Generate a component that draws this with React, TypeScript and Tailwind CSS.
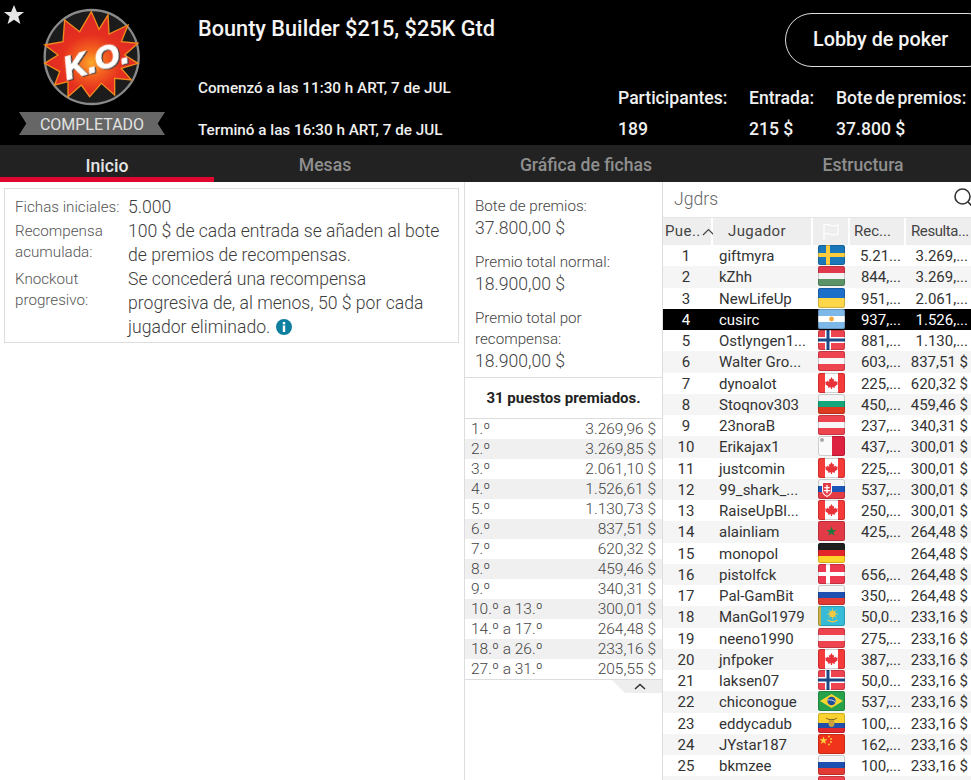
import React from "react";

type Row = [string, string, string, string, string];
const rows: Row[] = [
  ["1", "giftmyra", "se", "5.21...", "3.269,..."],
  ["2", "kZhh", "hu", "844,...", "3.269,..."],
  ["3", "NewLifeUp", "ua", "951,...", "2.061,..."],
  ["4", "cusirc", "ar", "937,...", "1.526,..."],
  ["5", "Ostlyngen1...", "no", "881,...", "1.130,..."],
  ["6", "Walter Gro...", "at", "603,...", "837,51 $"],
  ["7", "dynoalot", "ca", "225,...", "620,32 $"],
  ["8", "Stoqnov303", "bg", "450,...", "459,46 $"],
  ["9", "23noraB", "at", "237,...", "340,31 $"],
  ["10", "Erikajax1", "mt", "437,...", "300,01 $"],
  ["11", "justcomin", "ca", "225,...", "300,01 $"],
  ["12", "99_shark_...", "sk", "537,...", "300,01 $"],
  ["13", "RaiseUpBl...", "ca", "250,...", "300,01 $"],
  ["14", "alainliam", "ma", "425,...", "264,48 $"],
  ["15", "monopol", "de", "", "264,48 $"],
  ["16", "pistolfck", "dk", "656,...", "264,48 $"],
  ["17", "Pal-GamBit", "ru", "350,...", "264,48 $"],
  ["18", "ManGol1979", "kz", "50,0...", "233,16 $"],
  ["19", "neeno1990", "at", "275,...", "233,16 $"],
  ["20", "jnfpoker", "ca", "387,...", "233,16 $"],
  ["21", "laksen07", "no", "50,0...", "233,16 $"],
  ["22", "chiconogue", "br", "537,...", "233,16 $"],
  ["23", "eddycadub", "ec", "100,...", "233,16 $"],
  ["24", "JYstar187", "cn", "162,...", "233,16 $"],
  ["25", "bkmzee", "ru", "100,...", "233,16 $"],
  ["", "", "at", "", ""],
];

const prizes: [string, string][] = [
  ["1.º", "3.269,96 $"],
  ["2.º", "3.269,85 $"],
  ["3.º", "2.061,10 $"],
  ["4.º", "1.526,61 $"],
  ["5.º", "1.130,73 $"],
  ["6.º", "837,51 $"],
  ["7.º", "620,32 $"],
  ["8.º", "459,46 $"],
  ["9.º", "340,31 $"],
  ["10.º a 13.º", "300,01 $"],
  ["14.º a 17.º", "264,48 $"],
  ["18.º a 26.º", "233,16 $"],
  ["27.º a 31.º", "205,55 $"],
];

function FlagArt({ c }: { c: string }) {
  const h3 = (a: string, b: string, d: string) => (
    <>
      <rect width="27" height="7" fill={a} />
      <rect y="7" width="27" height="6" fill={b} />
      <rect y="13" width="27" height="7" fill={d} />
    </>
  );
  switch (c) {
    case "se":
      return (
        <>
          <rect width="27" height="20" fill="#1a78ba" />
          <rect x="8" width="4" height="20" fill="#fdcb3c" />
          <rect y="8" width="27" height="4" fill="#fdcb3c" />
        </>
      );
    case "hu":
      return h3("#e0394d", "#f3f3f3", "#5c9468");
    case "ua":
      return (
        <>
          <rect width="27" height="10" fill="#1c6fc9" />
          <rect y="10" width="27" height="10" fill="#fdd64a" />
        </>
      );
    case "ar":
      return (
        <>
          {h3("#7db8e8", "#ffffff", "#7db8e8")}
          <circle cx="13.5" cy="10" r="2.4" fill="#f6a93b" />
        </>
      );
    case "no":
      return (
        <>
          <rect width="27" height="20" fill="#ee4450" />
          <rect x="7" width="6" height="20" fill="#fff" />
          <rect y="7" width="27" height="6" fill="#fff" />
          <rect x="8.5" width="3" height="20" fill="#1d4a86" />
          <rect y="8.5" width="27" height="3" fill="#1d4a86" />
        </>
      );
    case "at":
      return h3("#ee4450", "#f7f7f7", "#ee4450");
    case "ca":
      return (
        <>
          <rect width="27" height="20" fill="#fff" />
          <rect width="7" height="20" fill="#f53a3a" />
          <rect x="20" width="7" height="20" fill="#f53a3a" />
          <path d="M13.5 4l1.4 2.6 1.3-.7-.5 3.2 1.8-1.6.4 1.2 2-.3-.7 2 .8.5-3.3 2.6.4 1.2-3-.4V16h-1.2v-1.7l-3 .4.4-1.2-3.3-2.6.8-.5-.7-2 2 .3.4-1.2 1.8 1.6-.5-3.2 1.3.7z" fill="#e8323a" />
        </>
      );
    case "bg":
      return h3("#f5f5f5", "#12a67a", "#dd3a1f");
    case "mt":
      return (
        <>
          <rect width="14" height="20" fill="#fafafa" />
          <rect x="14" width="13" height="20" fill="#dc2240" />
          <circle cx="4" cy="4" r="2" fill="#a8a8a8" />
        </>
      );
    case "sk":
      return (
        <>
          {h3("#f5f5f5", "#1c55b8", "#e53b44")}
          <path d="M4 3h10v9c0 3-2.5 4.5-5 6-2.5-1.5-5-3-5-6z" fill="#fff" />
          <path d="M5 4h8v8c0 2.4-2 3.6-4 4.8-2-1.2-4-2.4-4-4.8z" fill="#e53b44" />
          <path d="M8.3 6h1.4v2h2v1.2h-2V11h2.6v1.2H9.7v2H8.3v-2H5.7V11h2.6V9.2h-2V8h2z" fill="#fff" />
        </>
      );
    case "ma":
      return (
        <>
          <rect width="27" height="20" fill="#e23a46" />
          <path d="M13.5 5.5l1.3 3.5h3.7l-3 2.2 1.1 3.6-3.1-2.2-3.1 2.2 1.1-3.6-3-2.2h3.7z" fill="#1f7a3f" />
        </>
      );
    case "de":
      return h3("#1f1f1f", "#e3262a", "#fdd329");
    case "dk":
      return (
        <>
          <rect width="27" height="20" fill="#ee3a50" />
          <rect x="8" width="4" height="20" fill="#fff" />
          <rect y="8" width="27" height="4" fill="#fff" />
        </>
      );
    case "ru":
      return h3("#f5f5f5", "#1c4fb0", "#e23b35");
    case "kz":
      return (
        <>
          <rect width="27" height="20" fill="#36bcd8" />
          <rect width="3" height="20" fill="#c9b44a" />
          <circle cx="14.5" cy="8" r="3.2" fill="#f3c93f" />
          <path d="M14.5 2.5v11M9 8h11M10.6 4.1l7.8 7.8M18.4 4.1l-7.8 7.8" stroke="#f3c93f" strokeWidth=".8" />
          <path d="M9.5 14c3 2 7 2 10 0" stroke="#f3c93f" strokeWidth="1.4" fill="none" />
        </>
      );
    case "br":
      return (
        <>
          <rect width="27" height="20" fill="#27a24a" />
          <path d="M13.5 3L25 10l-11.500 7L2 10z" fill="#f8d430" />
          <circle cx="13.5" cy="10" r="4.2" fill="#1f4e9c" />
          <path d="M9.500 9c3-.6 6 .3 8 2" stroke="#fff" strokeWidth=".8" fill="none" />
        </>
      );
    case "ec":
      return (
        <>
          <rect width="27" height="10" fill="#fad22f" />
          <rect y="10" width="27" height="5" fill="#1f4fa8" />
          <rect y="15" width="27" height="5" fill="#e0262f" />
          <ellipse cx="13.500" cy="10" rx="3" ry="4" fill="#c9a13a" />
          <path d="M8 5c2 1.500 3.500 1.500 5.500 1.500S17 6.500 19 5" stroke="#7a5d2a" strokeWidth="1" fill="none" />
        </>
      );
    case "cn":
      return (
        <>
          <rect width="27" height="20" fill="#f0341c" />
          <path d="M5.500 2.500l1 2.800h3l-2.400 1.800.9 2.900-2.500-1.800-2.500 1.800.9-2.900-2.400-1.800h3z" fill="#fcd33c" />
          <circle cx="11" cy="2.500" r=".9" fill="#fcd33c" />
          <circle cx="13" cy="5" r=".9" fill="#fcd33c" />
          <circle cx="13" cy="8" r=".9" fill="#fcd33c" />
          <circle cx="11" cy="10.500" r=".9" fill="#fcd33c" />
        </>
      );
    default:
      return null;
  }
}

function Flag({ c }: { c: string }) {
  return (
    <svg width="27" height="20" viewBox="0 0 27 20" className="block">
      <defs>
        <clipPath id={"f-" + c}>
          <rect width="27" height="20" rx="2" />
        </clipPath>
      </defs>
      <g clipPath={`url(#f-${c})`}>
        <FlagArt c={c} />
      </g>
      <rect x=".5" y=".5" width="26" height="19" rx="2" fill="none" stroke="#000" strokeOpacity=".18" />
    </svg>
  );
}

function Logo() {
  const pts =
    "275,35 298,88 325,45 328,102 385,75 365,125 415,130 375,165 415,190 365,205 395,240 345,235 345,285 305,250 270,290 245,255 205,290 205,245 165,255 180,215 135,190 175,165 135,135 190,125 195,60 240,95";
  return (
    <svg width="100" height="100" viewBox="127 21 300 300" className="block">
      <defs>
        <radialGradient id="burst" cx="50%" cy="60%" r="50%">
          <stop offset="0%" stopColor="#fba82a" />
          <stop offset="30%" stopColor="#f4641f" />
          <stop offset="65%" stopColor="#e6301f" />
          <stop offset="100%" stopColor="#dd2a25" />
        </radialGradient>
      </defs>
      <circle cx="276" cy="171" r="141" fill="#1c1c1c" stroke="#8a8a8a" strokeWidth="7" />
      <polygon points={pts} fill="url(#burst)" stroke="#f08a1c" strokeWidth="4" strokeLinejoin="miter" />
      <text
        x="288"
        y="214"
        textAnchor="middle"
        transform="rotate(-16 288 180)"
        fill="#ffffff"
        stroke="#ffffff"
        strokeWidth="4"
        fontFamily="'Liberation Sans', sans-serif"
        fontWeight="700"
        fontStyle="italic"
        fontSize="96"
        className="drop-shadow-[3px_3px_0_#3a3a3a]"
      >
        K.O.
      </text>
    </svg>
  );
}

export default function App() {
  return (
    <div className="w-[971px] h-[780px] overflow-hidden bg-white font-['Roboto',sans-serif] relative">
      <svg width="24" height="24" viewBox="0 0 24 24" className="absolute left-[2px] top-[3px]">
        <path d="M12 2l2.900 7h7.100l-5.700 4.600 2.100 7.400L12 16.800 5.600 21l2.100-7.400L2 9h7.100z" fill="#e6e6e6" />
      </svg>

      <header className="h-[145px] bg-black text-white flex">
        <div className="w-[198px] shrink-0 flex flex-col">
          <div className="pl-[42px] pt-[7px]">
            <Logo />
          </div>
          <div className="ml-[19px] mt-[5px] w-[146px] h-[23px] bg-[#666666] text-[#e2e2e2] text-[16px] leading-[25px] text-center [clip-path:polygon(0_0,5%_50%,0_100%,100%_100%,95%_50%,100%_0)]">
            COMPLETADO
          </div>
        </div>
        <div className="w-[420px] shrink-0 flex flex-col">
          <div className="mt-[17px] text-[21.7px] leading-[24px] font-medium text-[#f5f5f5] whitespace-nowrap">Bounty Builder $215, $25K Gtd</div>
          <div className="mt-[39px] text-[15.25px] leading-[17px] font-medium text-[#f0f0f0] whitespace-nowrap">Comenzó a las 11:30 h ART, 7 de JUL</div>
          <div className="mt-[25px] text-[15.25px] leading-[17px] font-medium text-[#f0f0f0] whitespace-nowrap">Terminó a las 16:30 h ART, 7 de JUL</div>
        </div>
        <div className="flex-1 flex flex-col min-w-0">
          <div className="pl-[167px] pt-[13px]">
            <div className="w-[210px] h-[54px] rounded-[27px] border border-[#dddddd] pl-[27px] text-[19.8px] leading-[52px] font-medium text-[#f5f5f5] whitespace-nowrap">Lobby de poker</div>
          </div>
          <div className="mt-[22px] flex text-[17.6px] font-medium text-[#f0f0f0] leading-[19px]">
            <div className="w-[131px]">
              <div>Participantes:</div>
              <div className="mt-[12px]">189</div>
            </div>
            <div className="w-[87px]">
              <div>Entrada:</div>
              <div className="mt-[12px]">215 $</div>
            </div>
            <div className="whitespace-nowrap">
              <div className="[word-spacing:-1.5px]">Bote de premios:</div>
              <div className="mt-[12px]">37.800 $</div>
            </div>
          </div>
        </div>
      </header>

      <nav className="h-[37px] bg-[#222222] flex text-[17.6px] font-medium text-[#8f8f8f] leading-[41px]">
        <div className="w-[214px] h-[37px] text-center text-[#e4e4e4] border-b-[5px] border-[#e0062f] leading-[42px]">Inicio</div>
        <div className="w-[222px] text-center">Mesas</div>
        <div className="w-[300px] text-center">Gráfica de fichas</div>
        <div className="flex-1 pl-[19px] text-center">Estructura</div>
      </nav>

      <main className="flex h-[598px] bg-white">
        <section className="w-[465px] shrink-0 border-r border-[#dddddd] pl-[4px] pt-[6px] text-[#3d3d3d]">
          <div className="w-[455px] h-[155px] border border-[#dddddd] pt-[6px] pl-[10px]">
            <div className="flex">
              <div className="w-[113px] shrink-0 text-[15.2px] leading-[24px] text-[#555555] font-light whitespace-nowrap">Fichas iniciales:</div>
              <div className="text-[17.6px] leading-[24px] font-light">5.000</div>
            </div>
            <div className="flex">
              <div className="w-[113px] shrink-0 text-[15.2px] leading-[21px] pt-[2px] text-[#555555] font-light">Recompensa<br />acumulada:</div>
              <div className="text-[17.6px] leading-[24px] font-light w-[325px] whitespace-nowrap">100 $ de cada entrada se añaden al bote<br />de premios de recompensas.</div>
            </div>
            <div className="flex">
              <div className="w-[113px] shrink-0 text-[15.2px] leading-[21px] pt-[2px] text-[#555555] font-light">Knockout<br />progresivo:</div>
              <div className="text-[17.6px] leading-[24px] font-light w-[325px] whitespace-nowrap">
                Se concederá una recompensa<br />progresiva de, al menos, 50 $ por cada<br />jugador eliminado.{" "}
                <svg width="16" height="16" viewBox="0 0 16 16" className="inline-block align-[-2px] ml-[1px]">
                  <circle cx="8" cy="8" r="8" fill="#0f7f9f" />
                  <rect x="6.800" y="6.500" width="2.400" height="6.500" fill="#fff" />
                  <rect x="6.800" y="3" width="2.400" height="2.400" fill="#fff" />
                </svg>
              </div>
            </div>
          </div>
        </section>

        <section className="w-[198px] shrink-0 border-r border-[#dddddd] flex flex-col text-[#444444]">
          <div className="h-[195px] pl-[10px] pt-[14px] font-light">
            <div className="text-[15.2px] leading-[21px]">Bote de premios:</div>
            <div className="text-[17.6px] leading-[23px]">37.800,00 $</div>
            <div className="text-[15.2px] leading-[21px] mt-[12px]">Premio total normal:</div>
            <div className="text-[17.6px] leading-[23px]">18.900,00 $</div>
            <div className="text-[15.2px] leading-[21px] mt-[12px]">Premio total por<br />recompensa:</div>
            <div className="text-[17.6px] leading-[23px]">18.900,00 $</div>
          </div>
          <div className="h-[42px] border-y border-[#dddddd] text-center text-[15px] leading-[41px] font-bold text-[#222222] whitespace-nowrap">31 puestos premiados.</div>
          <div className="text-[15.5px] font-light text-[#444444]">
            {prizes.map(([a, b], i) => (
              <div key={a} className={`h-[20px] leading-[20px] flex justify-between pl-[6px] pr-[6px] ${i % 2 === 1 ? "bg-[#f0f0f0]" : "bg-white"}`}>
                <span>{a}</span>
                <span>{b}</span>
              </div>
            ))}
          </div>
          <div className="border-t border-[#dddddd] flex justify-end">
            <div className="w-[50px] h-[13px] bg-[#eeeeee] flex justify-center items-center pl-[6px] [clip-path:polygon(0_0,100%_0,100%_100%,26%_100%)]">
              <svg width="12" height="7" viewBox="0 0 12 7">
                <path d="M1 6l5-4.500L11 6" fill="none" stroke="#333" strokeWidth="1.500" />
              </svg>
            </div>
          </div>
        </section>

        <section className="flex-1 min-w-0 text-[15px] text-[#333333]">
          <div className="h-[36px] flex justify-between items-center pl-[11px] border-b border-[#e4e4e4] overflow-hidden">
            <span className="text-[17.6px] text-[#666666] font-light">Jgdrs</span>
            <svg width="22" height="22" viewBox="0 0 22 22" className="shrink-0 -mr-[4px] mt-[-4px]">
              <circle cx="9.500" cy="9.500" r="7.500" fill="none" stroke="#333" strokeWidth="1.600" />
              <path d="M15 15l6 6" stroke="#333" strokeWidth="1.600" />
            </svg>
          </div>
          <div className="grid grid-cols-[50px_100px_37px_56px_65px] h-[27px] leading-[27px] text-[#444444]">
            <div className="bg-[#eeeeee] mr-[2px] pl-[2px] flex items-center gap-[1px] whitespace-nowrap">
              <span className="tracking-[0.4px]">Pue..</span>
              <svg width="13" height="8" viewBox="0 0 13 8" className="shrink-0">
                <path d="M1 7l5.500-5.500L12 7" fill="none" stroke="#444" strokeWidth="1.200" />
              </svg>
            </div>
            <div className="bg-[#eeeeee] mr-[2px] text-center pr-[10px] tracking-[0.4px]">Jugador</div>
            <div className="bg-[#eeeeee] mr-[2px] flex items-center justify-center">
              <svg width="20" height="18" viewBox="0 0 20 18">
                <path d="M3 17V2c3-1.500 5 0 7 .5s4 .5 7-.5v9c-3 1-5 1-7 .5s-4-2-7-.5" fill="none" stroke="#ffffff" strokeWidth="1.200" />
              </svg>
            </div>
            <div className="bg-[#eeeeee] mr-[2px] pl-[4px]">Rec...</div>
            <div className="bg-[#eeeeee] pl-[5px] whitespace-nowrap tracking-[-0.4px]">Resulta...</div>
          </div>
          {rows.map((r, i) => {
            const me = r[1] === "cusirc";
            return (
              <div
                key={i}
                className={`grid grid-cols-[50px_100px_37px_56px_65px] h-[21.25px] leading-[22px] whitespace-nowrap ${
                  me ? "bg-black text-white" : i % 2 === 1 ? "bg-[#f5f5f5]" : "bg-white"
                }`}
              >
                <div className="text-center pr-[4px]">{r[0]}</div>
                <div className="pl-[6px]">{r[1]}</div>
                <div className="pl-[5px]">
                  <Flag c={r[2]} />
                </div>
                <div className="text-right pr-[5px]">{r[3]}</div>
                <div className="text-right pr-[3px]">{r[4]}</div>
              </div>
            );
          })}
        </section>
      </main>
    </div>
  );
}
